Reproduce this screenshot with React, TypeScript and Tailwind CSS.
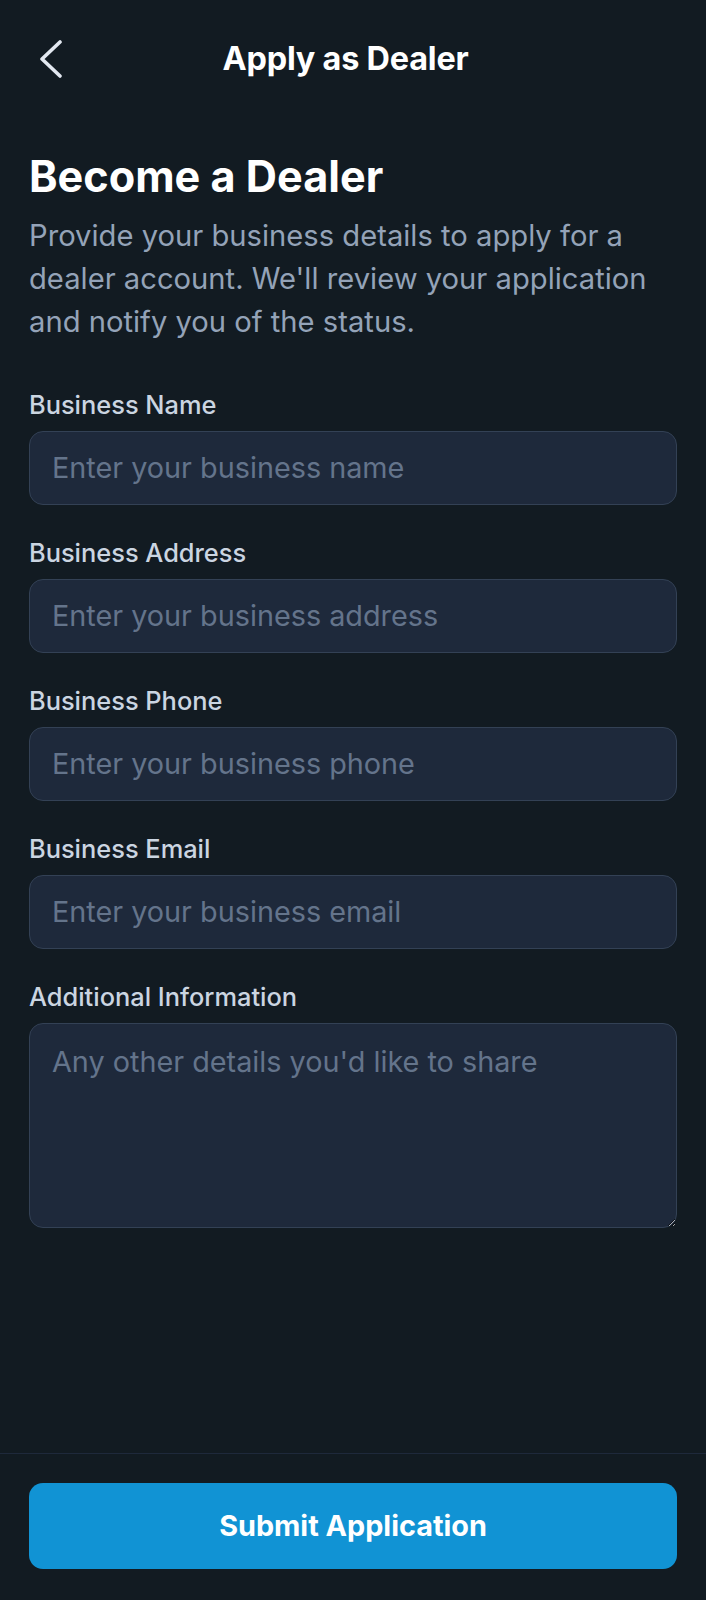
import { useState } from "react";

const fields = [
  { id: "name", label: "Business Name", placeholder: "Enter your business name", type: "text" },
  { id: "address", label: "Business Address", placeholder: "Enter your business address", type: "text" },
  { id: "phone", label: "Business Phone", placeholder: "Enter your business phone", type: "tel" },
  { id: "email", label: "Business Email", placeholder: "Enter your business email", type: "email" },
];

function BackIcon() {
  return (
    <svg width="24" height="38" viewBox="0 0 24 38" fill="none" aria-hidden>
      <polyline
        points="21,2 3,19 21,36"
        stroke="#e2e8f0"
        strokeWidth="3.6"
        strokeLinecap="round"
        strokeLinejoin="round"
      />
    </svg>
  );
}

export default function App() {
  const [values, setValues] = useState<Record<string, string>>({});
  const set = (id: string, v: string) => setValues((s) => ({ ...s, [id]: v }));

  return (
    <div className="flex h-screen flex-col bg-[#121b22] font-['Inter',_'Noto_Sans',_sans-serif] text-white">
      <header className="flex h-[118px] shrink-0 items-center px-[29px]">
        <button className="flex h-[60px] w-[72px] items-center pl-[10px]" aria-label="Back">
          <BackIcon />
        </button>
        <h1 className="flex-1 text-center text-[32.4px] font-bold tracking-[-0.2px]">Apply as Dealer</h1>
        <div className="w-[87px]" />
      </header>

      <main className="flex-1 overflow-hidden px-[29px] pt-[32px]">
        <h2 className="text-[43.2px] font-bold leading-[52px]">Become a Dealer</h2>
        <p className="mt-[12px] text-[29.2px] leading-[43.2px] text-[#94a3b8]">
          Provide your business details to apply for a dealer account. We'll review your application
          and notify you of the status.
        </p>

        <form className="mt-[43px] flex flex-col gap-[30px]" onSubmit={(e) => e.preventDefault()}>
          {fields.map((f) => (
            <div key={f.id} className="flex flex-col gap-[8px]">
              <label htmlFor={f.id} className="text-[25.4px] font-medium leading-[36px] text-[#cbd5e1]">
                {f.label}
              </label>
              <input
                id={f.id}
                type={f.type}
                value={values[f.id] ?? ""}
                onChange={(e) => set(f.id, e.target.value)}
                placeholder={f.placeholder}
                className="h-[74px] w-full rounded-[14px] border-[1.5px] border-[#334155] bg-[#1e293b] px-[22px] text-[28.8px] text-white outline-none placeholder:text-[#64748b]"
              />
            </div>
          ))}
          <div className="flex flex-col gap-[8px]">
            <label htmlFor="info" className="text-[25.4px] font-medium leading-[36px] text-[#cbd5e1]">
              Additional Information
            </label>
            <textarea
              id="info"
              value={values.info ?? ""}
              onChange={(e) => set("info", e.target.value)}
              placeholder="Any other details you'd like to share"
              className="h-[205px] w-full rounded-[14px] border-[1.5px] border-[#334155] bg-[#1e293b] px-[22px] py-[20px] text-[28.8px] leading-[36px] text-white outline-none placeholder:text-[#64748b]"
            />
          </div>
        </form>
      </main>

      <footer className="shrink-0 border-t-[1.8px] border-[#1e293b] px-[29px] pb-[31px] pt-[29px]">
        <button className="h-[86px] w-full rounded-[14px] bg-[#1193d4] text-[28.8px] font-bold text-white">
          Submit Application
        </button>
      </footer>
    </div>
  );
}
